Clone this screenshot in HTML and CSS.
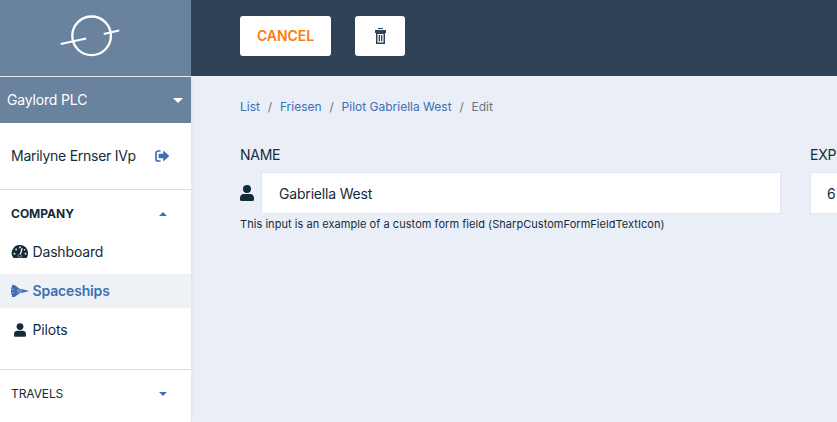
FILE: index.html
```html
<!DOCTYPE html>
<html lang="en">
<head>
<meta charset="utf-8">
<title>Edit pilot</title>
<link rel="stylesheet" href="styles.css">
</head>
<body>
<svg class="defs" aria-hidden="true">
  <symbol id="user" viewBox="0 0 14 16"><circle cx="7" cy="4" r="4"/><path d="M3.700 9h6.600C12.600 9 14 10.800 14 13v1.500a1.500 1.500 0 0 1-1.500 1.500h-11A1.500 1.500 0 0 1 0 14.500V13c0-2.200 1.400-4 3.700-4z"/></symbol>
</svg>
<div class="app">
  <aside class="sidebar">
    <div class="logo">
      <svg width="60" height="42" viewBox="0 0 60 42" fill="none" stroke="#fff"><circle cx="31.600" cy="20.800" r="19.300" stroke-width="2.300"/><path d="M.7 29l25.500-5.600M43.700 18.900l15.500-3.500" stroke-width="2"/></svg>
    </div>
    <div class="tenant"><span>Gaylord PLC</span><svg width="10" height="5" viewBox="0 0 10 5"><path d="M0 0h10L5 5z" fill="#fff"/></svg></div>
    <div class="account"><span>Marilyne Ernser IVp</span>
      <svg width="14" height="12" viewBox="0 0 14 12" fill="#3c6fb4"><path d="M5.500 1H3a2 2 0 0 0-2 2v6a2 2 0 0 0 2 2h2.500" fill="none" stroke="#3c6fb4" stroke-width="1.700"/><path d="M4.200 3.700h4V1.300q0-.8.700-.3l4.900 4.500q.4.500 0 1L8.900 11q-.7.500-.7-.3V8.300h-4q-.6 0-.6-.6V4.300q0-.6.6-.6z"/></svg>
    </div>
    <section class="group open">
      <h2><span>COMPANY</span><svg width="8" height="4" viewBox="0 0 8 4"><path d="M0 4h8L4 0z" fill="#3c6fb4"/></svg></h2>
      <a class="item dashboard"><svg width="18" height="14" viewBox="0 0 18 14"><path d="M9 0a8 8 0 0 1 8 8q0 2.400-1.100 4.500-.3.500-.9.500H3q-.6 0-.9-.5A8 8 0 0 1 9 0z"/><g fill="#fff"><circle cx="9" cy="2.500" r=".9"/><circle cx="5.100" cy="4.400" r=".9"/><circle cx="3.500" cy="8.700" r=".9"/><circle cx="14.500" cy="8.700" r=".9"/><circle cx="13.500" cy="4.700" r=".7"/></g><path d="M11.200 3.300L9.300 9.500" stroke="#fff" stroke-width="1.200"/><path d="M7.300 12a1.900 1.900 0 0 1 .3-2.400 2 2 0 0 1 3 2.400z" fill="#142c3a" stroke="#fff" stroke-width=".4"/></svg><span>Dashboard</span></a>
      <a class="item active"><svg width="18" height="14" viewBox="0 0 18 14"><path d="M0 3.500h1V1h2.500l5.200 3.700L16 6.200l1.800.8-1.800.8-7.300 1.500L3.500 13H1v-2.500H0z" fill="#3c6fb4"/><path d="M0 5.200h3M0 8.800h3M6 6.100h5M6 7.900h5M14.500 7h1" stroke="#eef2f6" stroke-width=".45"/></svg><span>Spaceships</span></a>
      <a class="item"><svg width="18" height="14"><use href="#user" x="3" width="12" height="14"/></svg><span>Pilots</span></a>
    </section>
    <section class="group"><h2><span>TRAVELS</span><svg width="8" height="4" viewBox="0 0 8 4"><path d="M0 0h8L4 4z" fill="#3c6fb4"/></svg></h2></section>
  </aside>
  <main>
    <header class="actions">
      <button class="cancel">CANCEL</button>
      <button class="delete" aria-label="Delete"><svg width="11" height="16" viewBox="0 0 11 16" fill="#304255"><path d="M3 0h5v1H3zM0 2h11v3H0zM1 4h9v12H1z"/><path d="M2.500 6h6v8.500h-6z" fill="#fff"/><path d="M3.700 7H5v6.200H3.700zM6 7h1.300v6.200H6z"/></svg></button>
    </header>
    <nav class="breadcrumb"><a>List</a><i>/</i><a>Friesen</a><i>/</i><a class="pilot">Pilot Gabriella West</a><i>/</i><span>Edit</span></nav>
    <form class="fields">
      <div class="field name"><label>NAME</label><div class="control"><svg width="14" height="16" fill="#142c3a"><use href="#user" width="14" height="16"/></svg><div class="input">Gabriella West</div></div><p>This input is an example of a custom form field (SharpCustomFormFieldTextIcon)</p></div>
      <div class="field experience"><label>EXP</label><div class="input">6</div></div>
    </form>
  </main>
</div>
</body>
</html>
```
FILE: styles.css
```css
* { box-sizing: border-box; }
body { margin: 0; overflow: hidden; font-family: Inter, sans-serif; font-size: 14px; line-height: 20px; color: #142c3a; }
svg { display: block; flex: none; }
.defs { display: none; }
.app { display: flex; height: 422px; background: #eaeef6; }
.sidebar { width: 191px; flex: none; background: #fff; box-shadow: 0 0 3px #cfdceb; }
.logo { height: 77px; border-bottom: 1px solid #e5e5f3; background: #69829d; padding: 15px 0 0 60px; }
.tenant { height: 46px; background: #69829d; color: #fff; display: flex; align-items: center; justify-content: space-between; padding: 0 8px 0 7px; letter-spacing: -.17px; }
.account { height: 67px; border-bottom: 1px solid #d5e0ed; display: flex; align-items: center; justify-content: space-between; padding: 0 22px 0 11px; letter-spacing: -.27px; }
.group h2 { margin: 0; height: 48px; display: flex; align-items: center; justify-content: space-between; padding: 0 24px 0 11px; font-size: 12px; font-weight: 400; letter-spacing: -.1px; }
.group.open { height: 180px; border-bottom: 1px solid #d5e0ed; }
.group.open h2 { height: 45px; padding-top: 2px; font-weight: 700; letter-spacing: 0; }
.item { height: 34px; margin-bottom: 5px; display: flex; align-items: center; gap: 3.500px; padding-left: 11px; fill: #142c3a; letter-spacing: -.16px; }
.active { background: #eef2f6; color: #3c6fb4; font-weight: 600; }
main { flex: 1; min-width: 0; overflow: hidden; }
.actions { height: 76px; background: #304255; display: flex; gap: 24px; padding: 16px 49px; }
button { height: 40px; border: 0; border-radius: 3px; background: #fff; font: 600 14px/20px Inter, sans-serif; padding: 0; }
.cancel { width: 91px; color: #ff7b0b; letter-spacing: -.05px; }
.delete { width: 50px; display: flex; align-items: center; justify-content: center; }
.breadcrumb { display: flex; margin: 21px 0 0 49px; font-size: 12px; color: #6c757d; }
.breadcrumb a { color: #3c6fb4; }
.breadcrumb i { font-style: normal; margin: 0 7.800px; }
.fields { display: flex; gap: 29px; width: 1111px; margin: 28px 0 0 49px; }
.field { width: 541px; }
label { display: block; height: 27px; letter-spacing: -.25px; }
.control { display: flex; align-items: center; gap: 7px; }
.input { flex: 1; height: 42px; border: 1px solid #e2e7ed; background: #fff; padding: 11px 17px 9px; letter-spacing: -.18px; }
.experience .input { padding-left: 16px; }
.field p { margin: 0; font-size: 11px; line-height: 20px; letter-spacing: .045px; }
```
